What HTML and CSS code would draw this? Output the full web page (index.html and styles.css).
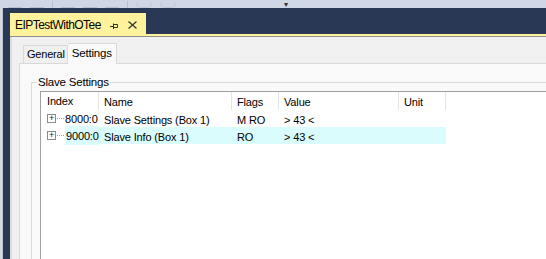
FILE: index.html
```html
<!DOCTYPE html>
<html lang="en">
<head>
    <meta charset="UTF-8">
    <title>EIPTestWithOTee - Settings</title>
    <link rel="stylesheet" href="styles.css">
</head>
<body>

    <div class="toolbar">
        <span class="tool"></span>
        <span class="tool"></span>
        <span class="sep"></span>
        <span class="tool"></span>
        <span class="tool"></span>
        <span class="tool"></span>
        <span class="sep"></span>
        <span class="tool round"></span>
        <span class="tool round"></span>
        <span class="drop">&#9662;</span>
    </div>

    <div class="frame">
        <div class="side"></div>
        <div class="well">
            <div class="doc-tabs">
                <div class="doc-tab">
                    <span class="doc-title">EIPTestWithOTee</span>
                    <svg class="pin" width="8" height="6" viewBox="0 0 8 6">
                        <path d="M0 3.5h3M3.5 0.5v6M3.5 1.5h4v3h-4" fill="none" stroke="#333" stroke-width="1"/>
                    </svg>
                    <svg class="close" width="9" height="8" viewBox="0 0 9 8">
                        <path d="M0.5 0.5l8 7M8.5 0.5l-8 7" fill="none" stroke="#333" stroke-width="1.2"/>
                    </svg>
                </div>
            </div>
            <div class="doc">
                <div class="tabs">
                    <div class="tab">General</div>
                    <div class="tab active">Settings</div>
                </div>
                <div class="page">
                    <fieldset class="group">
                        <legend>Slave Settings</legend>
                        <div class="tree">
                            <div class="row head">
                                <div class="cell c-index">Index</div>
                                <div class="cell c-name">Name</div>
                                <div class="cell c-flags">Flags</div>
                                <div class="cell c-value">Value</div>
                                <div class="cell c-unit">Unit</div>
                            </div>
                            <div class="row">
                                <div class="cell c-index"><span class="plus">+</span><span class="dots"></span>8000:0</div>
                                <div class="cell c-name">Slave Settings (Box 1)</div>
                                <div class="cell c-flags">M RO</div>
                                <div class="cell c-value">&gt; 43 &lt;</div>
                                <div class="cell c-unit"></div>
                            </div>
                            <div class="row selected">
                                <div class="cell c-index"><span class="plus">+</span><span class="dots"></span><span class="hl">9000:0</span></div>
                                <div class="cell c-name">Slave Info (Box 1)</div>
                                <div class="cell c-flags">RO</div>
                                <div class="cell c-value">&gt; 43 &lt;</div>
                                <div class="cell c-unit"></div>
                            </div>
                        </div>
                    </fieldset>
                </div>
            </div>
        </div>
    </div>

</body>
</html>
```

FILE: styles.css
```css
body {
    margin: 0;
    width: 546px;
    height: 259px;
    overflow: hidden;
    font-family: "Liberation Sans", Arial, sans-serif;
    font-size: 11px;
    color: #000;
    background-color: #293955;
}
.toolbar {
    height: 8px;
    background-color: #cfd6e5;
    display: flex;
    align-items: flex-end;
    gap: 8px;
    padding-left: 8px;
    overflow: hidden;
}
.tool {
    width: 14px;
    height: 4px;
    border-bottom: 1px solid #b4bccb;
}
.tool.round {
    border-radius: 0 0 5px 5px;
    border: 1px solid #c0c6d2;
    border-top: none;
}
.sep {
    width: 1px;
    height: 7px;
    background-color: #b8bfcc;
}
.drop {
    font-size: 8px;
    line-height: 6px;
    color: #333;
    margin-left: 100px;
}
.frame {
    display: flex;
    height: 251px;
}
.side {
    width: 2px;
    background-color: #d5dae5;
    border-right: 1px solid #b9c1d1;
}
.well {
    flex: 1;
    padding-left: 7px;
    display: flex;
    flex-direction: column;
}
.doc-tabs {
    height: 26px;
    display: flex;
    align-items: flex-end;
}
.doc-tab {
    width: 131px;
    height: 21px;
    padding-left: 5px;
    background-color: #fff29d;
    display: flex;
    align-items: center;
}
.doc-title {
    font-size: 12px;
    letter-spacing: -0.55px;
    padding-top: 3px;
}
.pin {
    margin-left: 9px;
    margin-top: 4px;
}
.close {
    margin-left: 10px;
    margin-top: 3px;
}
.doc {
    flex: 1;
    border-top: 2px solid #fff29d;
    background-color: #f0f0f0;
    box-shadow: inset 0 1px 0 #8f8f8f, inset 2px 0 0 #dcdcdc;
    padding: 8px 0 0 9px;
    overflow: hidden;
}
.tabs {
    display: flex;
    align-items: flex-end;
    height: 19px;
    padding-left: 4px;
    position: relative;
    z-index: 1;
}
.tab {
    height: 17px;
    line-height: 17px;
    padding: 0 2px 0 3px;
    border: 1px solid #d9d9d9;
    border-bottom: none;
    background-color: #f0f0f0;
    letter-spacing: -0.2px;
}
.tab.active {
    height: 20px;
    line-height: 19px;
    padding: 0 4px 0 4px;
    background-color: #f9f9f9;
    font-size: 11.5px;
    margin-bottom: -1px;
    border-left: none;
}
.page {
    height: 200px;
    background-color: #f9f9f9;
    border: 1px solid #d9d9d9;
    border-right: none;
    padding: 12px 0 0 11px;
}
.group {
    margin: 0;
    height: 200px;
    padding: 0 0 0 8px;
    border: 1px solid #dcdcdc;
    border-right: none;
}
.group legend {
    padding: 0 1px;
    margin-left: -3px;
    letter-spacing: -0.2px;
    font-size: 11.5px;
}
.tree {
    margin-top: 3px;
    height: 180px;
    background-color: #fff;
    border: 1px solid #a0a0a0;
    border-right: none;
}
.row {
    display: flex;
    height: 17px;
    line-height: 20px;
}
.row.head {
    height: 18px;
    line-height: 21px;
}
.cell {
    padding-left: 5px;
    box-sizing: border-box;
    white-space: nowrap;
    letter-spacing: -0.15px;
}
.head .cell {
    border-right: 1px solid #e5e5e5;
}
.c-index { width: 58px; display: flex; align-items: center; padding-left: 6px; }
.c-name { width: 133px; }
.c-flags { width: 47px; }
.c-value { width: 120px; }
.c-unit { width: 47px; }
.selected .cell { background-color: #dbfcfc; }
.selected .c-index { background-color: transparent; }
.hl {
    background-color: #dbfcfc;
    line-height: 17px;
    padding-top: 2px;
    padding-left: 1px;
}
.plus {
    width: 7px;
    height: 7px;
    border: 1px solid #8c8c8c;
    font-size: 9px;
    line-height: 6px;
    text-align: center;
    color: #222;
    margin-right: 1px;
}
.dots {
    width: 7px;
    margin-right: 1px;
    border-top: 1px dotted #a0a0a0;
}
```
